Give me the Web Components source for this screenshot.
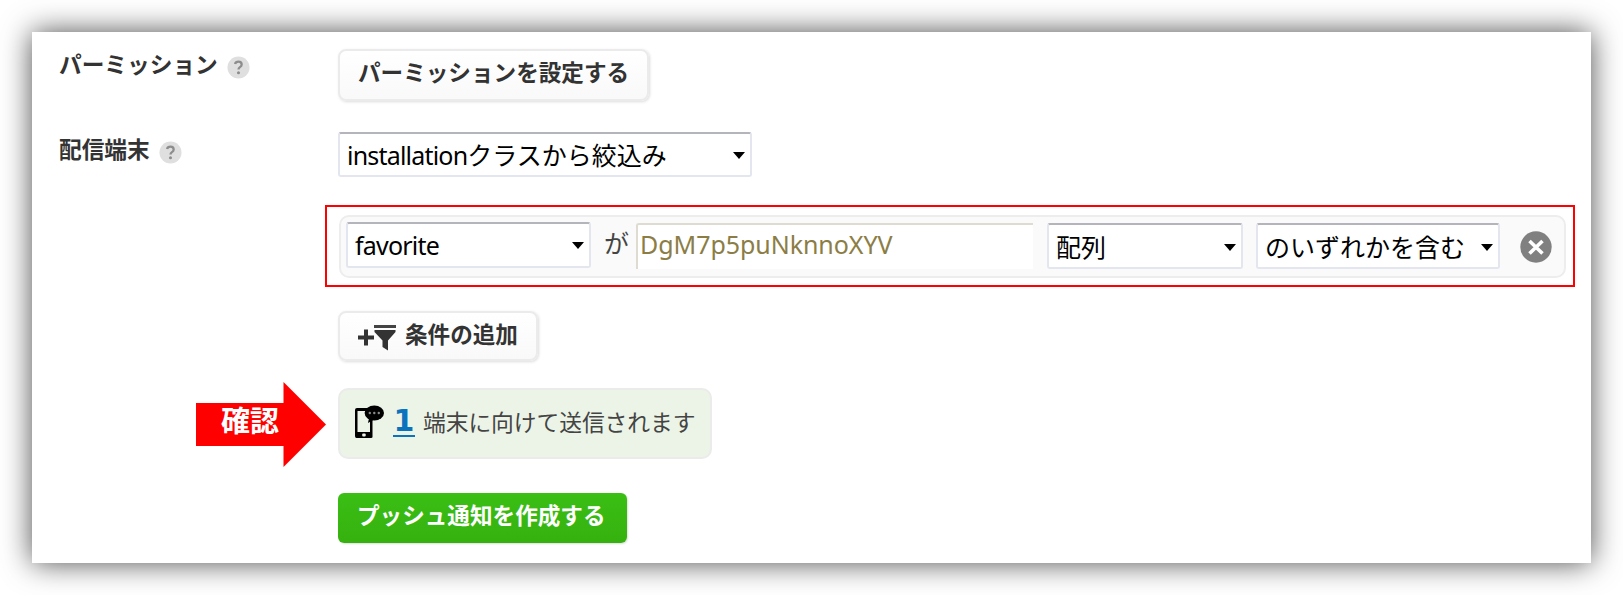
<!DOCTYPE html>
<html lang="ja">
<head>
<meta charset="utf-8">
<title>プッシュ通知</title>
<style>
html,body{margin:0;background:#fff}
body{font-family:"Noto Sans","Noto Sans CJK JP",sans-serif;color:#333;height:595px;overflow:hidden}
</style>
</head>
<body>
<push-form></push-form>
<script>
function define(name, html) {
  const template = document.createElement('template');
  template.innerHTML = html;
  customElements.define(name, class extends HTMLElement {
    constructor() {
      super();
      this.attachShadow({ mode: 'open' }).append(template.content.cloneNode(true));
    }
  });
}

define('form-row', `<style>
:host{display:grid;grid-template-columns:306px 1fr;align-items:start}
.content{display:flex}
</style><div><slot name="label"></slot></div><div class="content"><slot></slot></div>`);

define('help-label', `<style>
:host{display:flex;align-items:flex-start;padding-left:27px;font:700 22.7px/34px "Noto Sans CJK JP",sans-serif;color:#333;white-space:nowrap}
svg{width:23px;height:23px;margin:9px 0 0 9px;flex:none}
</style><span><slot></slot></span><svg viewBox="0 0 24 24"><circle cx="12" cy="12" r="11.5" fill="#dfdfdf"/><path d="M8.4 8.4Q9 5.9 12 5.9Q15.3 5.9 15.3 8.8Q15.3 10.4 13.5 11.6Q12 12.6 12 14" fill="none" stroke="#8d8d8d" stroke-width="2.4"/><circle cx="12" cy="17.4" r="1.6" fill="#8d8d8d"/></svg>`);

define('soft-button', `<style>
:host{display:flex;box-sizing:border-box;border:2px solid #ebebeb;border-radius:8px;background:linear-gradient(#fff,#f9f9f9);box-shadow:1px 1px 3px #ddd;font:700 22.6px/34px "Noto Sans CJK JP",sans-serif;color:#333;padding:3px 0 0 18px;white-space:nowrap}
</style><slot name="icon"></slot><span><slot></slot></span>`);

define('drop-down', `<style>
:host{display:flex;justify-content:space-between;box-sizing:border-box;height:46px;border:2px solid #e3e6ee;border-top-color:#b4b4bc;border-radius:3px;background:#fff;color:#000;font:25px/36px "Noto Sans","Noto Sans CJK JP",sans-serif;padding:4px 5px 0 7px;white-space:nowrap;flex:none}
svg{width:12px;height:7px;margin-top:15px;flex:none}
</style><span><slot></slot></span><svg viewBox="0 0 12 7"><path d="M0 0H12L6 7Z" fill="#000"/></svg>`);

define('value-field', `<style>
:host{display:block;box-sizing:border-box;width:397px;height:46px;margin-left:5px;border:solid #dedbd0;border-width:2px 0 0 2px;border-radius:3px 0 0 0;background:#fff;color:#8b7d45;font:25px/36px "Noto Sans",sans-serif;letter-spacing:-.05px;padding:1px 0 0 2px;flex:none;white-space:nowrap}
</style><span><slot></slot></span>`);

define('filter-row', `<style>
:host{display:block;box-sizing:border-box;width:1250px;height:82px;border:2px solid #f00;padding:8px 7px 6px 12px}
.bar{display:flex;box-sizing:border-box;height:63px;width:1227px;border:2px solid #ededed;border-radius:10px;background:#fafafa;padding:5px 0 0 5px}
.attr{width:245px;height:46px;letter-spacing:-.8px;padding-top:3px}
.ga{width:26px;margin-left:13px;margin-top:2px;margin-right:1px;font:25px/36px "Noto Sans CJK JP",sans-serif;color:#444}
.type{width:196px;margin:1px 0 0 14px}
.match{width:244px;margin:1px 0 0 13px}
.x{width:32px;height:32px;margin:9px 0 0 20px}
value-field{margin-top:1px}
</style><div class="bar"><drop-down class="attr">favorite</drop-down><span class="ga">が</span><value-field>DgM7p5puNknnoXYV</value-field><drop-down class="type">配列</drop-down><drop-down class="match">のいずれかを含む</drop-down><svg class="x" viewBox="0 0 32 32"><circle cx="16" cy="16" r="15.7" fill="#808080"/><path d="M9.5 10L22.5 22.5M22.5 10L9.5 22.5" stroke="#fff" stroke-width="3.6"/></svg></div>`);

define('callout-arrow', `<style>
:host{display:grid;width:130px;height:85px;margin-left:164px}
svg,span{grid-area:1/1}
span{font:700 29px/40px "Noto Sans CJK JP",sans-serif;color:#fff;margin:17px 0 0 25px}
</style><svg width="130" height="85" viewBox="0 0 130 85"><path d="M0 21H87.5V0L130 42.5L87.5 85V64H0Z" fill="#f00"/></svg><span><slot></slot></span>`);

define('device-notice', `<style>
:host{display:flex;box-sizing:border-box;width:374px;height:71px;border:2px solid #ebebeb;border-radius:10px;background:#ecf4e7;color:#444;font:22.8px/36px "Noto Sans CJK JP",sans-serif;letter-spacing:-.1px;white-space:nowrap;padding-left:15px}
svg{width:29px;height:34px;margin-top:15px;flex:none}
a{display:block;box-sizing:border-box;width:22px;height:29px;margin:18px 8px 0 9px;border-bottom:2px solid #0b73bd;text-align:center;color:#0b73bd;font:700 30px/26px "DejaVu Sans",sans-serif;flex:none}
span{margin-top:14px}
</style><svg viewBox="0 0 29 34"><path fill="#000" fill-rule="evenodd" d="M0 5Q0 3 2 3H14V6H2.5V27H15V14H17.5V32Q17.5 33 16 33H1.5Q0 33 0 31Z"/><path d="M1 27H17V32H1Z"/><rect x="7.2" y="28.5" width="3.5" height="3" rx="1" fill="#ecf4e7"/><ellipse cx="19.3" cy="8" rx="9.7" ry="7.4"/><path d="M14 13L13 18L20 14Z"/><g fill="#8a8a8a"><circle cx="14.8" cy="8" r="1.2"/><circle cx="19.3" cy="8" r="1.2"/><circle cx="23.8" cy="8" r="1.2"/></g></svg><a>1</a><span><slot></slot></span>`);

define('submit-button', `<style>
:host{display:block;box-sizing:border-box;width:289px;height:50px;border-radius:6px;background:linear-gradient(#3abf14,#36b10f);box-shadow:1px 1px 2px #ddd;color:#fff;font:700 22.6px/34px "Noto Sans CJK JP",sans-serif;padding:5px 0 0 19px;white-space:nowrap}
</style><span><slot></slot></span>`);

define('push-form', `<style>
:host{display:block;padding:32px 0 0 32px}
.panel{box-sizing:border-box;width:1559px;height:531px;background:#fff;box-shadow:0 0 28px rgba(0,0,0,.7);display:flex;flex-direction:column}
.r1{margin-top:17px;height:83px}
.r2{height:73px}
.r3{height:106px}
.r4{height:71px}
.r5{height:111px}
.perm{width:311px;height:52px;padding-top:4px}
.add{width:200px;height:50px;padding-top:4px}
.src{width:414px;height:45px;padding-top:3px}
.latin{letter-spacing:-.8px}
filter-row{margin-left:-13px}
.add svg{width:38px;height:28px;margin:7px 9px 0 0}
.l1{margin-top:-2px}
device-notice{margin-top:6px}
</style>
<div class="panel">
<form-row class="r1"><help-label class="l1" slot="label">パーミッション</help-label><soft-button class="perm">パーミッションを設定する</soft-button></form-row>
<form-row class="r2"><help-label class="l2" slot="label">配信端末</help-label><drop-down class="src"><span class="latin">installation</span>クラスから絞込み</drop-down></form-row>
<form-row class="r3"><filter-row></filter-row></form-row>
<form-row class="r4"><soft-button class="add"><svg slot="icon" viewBox="0 0 38 28"><path d="M6 5.5H10V11.5H16V15.5H10V21.5H6V15.5H0V11.5H6Z" fill="#333"/><path d="M16 1H38V4H16Z" fill="#444"/><path d="M16.5 6H37.5V8L30 16.5V26.5L24.5 23V16.5L16.5 8Z" fill="#333"/></svg>条件の追加</soft-button></form-row>
<form-row class="r5"><callout-arrow slot="label">確認</callout-arrow><device-notice>端末に向けて送信されます</device-notice></form-row>
<form-row><submit-button>プッシュ通知を作成する</submit-button></form-row>
</div>`);
</script>
</body>
</html>
